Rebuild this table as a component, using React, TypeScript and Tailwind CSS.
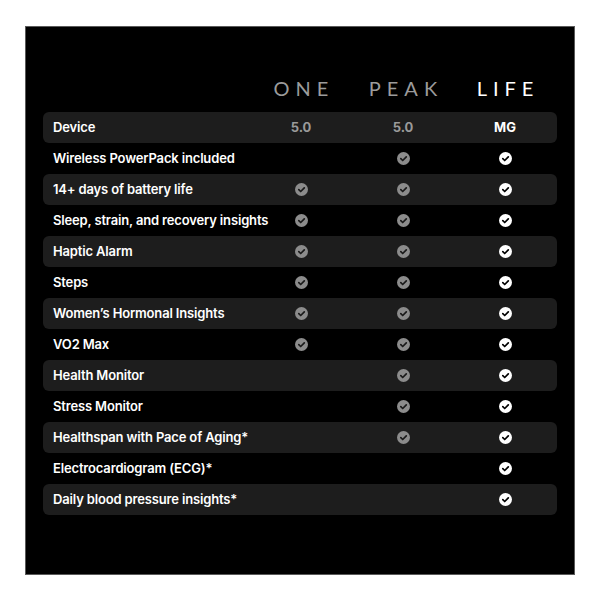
import React from "react";

type Mark = "none" | "grey" | "white";

const ROWS: { label: string; cells: (Mark | string)[] }[] = [
  { label: "Device", cells: ["5.0", "5.0", "MG"] },
  { label: "Wireless PowerPack included", cells: ["none", "grey", "white"] },
  { label: "14+ days of battery life", cells: ["grey", "grey", "white"] },
  { label: "Sleep, strain, and recovery insights", cells: ["grey", "grey", "white"] },
  { label: "Haptic Alarm", cells: ["grey", "grey", "white"] },
  { label: "Steps", cells: ["grey", "grey", "white"] },
  { label: "Women’s Hormonal Insights", cells: ["grey", "grey", "white"] },
  { label: "VO2 Max", cells: ["grey", "grey", "white"] },
  { label: "Health Monitor", cells: ["none", "grey", "white"] },
  { label: "Stress Monitor", cells: ["none", "grey", "white"] },
  { label: "Healthspan with Pace of Aging*", cells: ["none", "grey", "white"] },
  { label: "Electrocardiogram (ECG)*", cells: ["none", "none", "white"] },
  { label: "Daily blood pressure insights*", cells: ["none", "none", "white"] },
];

function Check({ tone }: { tone: "grey" | "white" }) {
  const fill = tone === "white" ? "#ffffff" : "#8c8c8c";
  const stroke = tone === "white" ? "#000000" : "#1a1a1a";
  return (
    <svg width="13" height="13" viewBox="0 0 13 13">
      <circle cx="6.5" cy="6.5" r="6.5" fill={fill} />
      <path d="M3.8 6.7 L5.7 8.5 L9.3 4.8" fill="none" stroke={stroke} strokeWidth="1.7" strokeLinecap="round" strokeLinejoin="round" />
    </svg>
  );
}

function Cell({ value, col }: { value: Mark | string; col: number }) {
  if (value === "none") return <div />;
  if (value === "grey" || value === "white") {
    return (
      <div className="flex items-center justify-center">
        <Check tone={value} />
      </div>
    );
  }
  return (
    <div className={`text-center text-[13px] font-bold ${col === 2 ? "text-white" : "text-[#9a9a9a]"}`}>{value}</div>
  );
}

export default function App() {
  return (
    <div className="flex h-[600px] w-[600px] items-start bg-white pl-[25px] pt-[26px]" style={{ fontFamily: "Inter, 'Open Sans', sans-serif" }}>
      <div className="h-[549px] w-[550px] border border-[#5a5a5a] bg-black pl-[17px] pt-[49px]">
        <div className="grid w-[514px] grid-cols-[207px_102px_102px_102px] pb-[12px]">
          <div />
          {["ONE", "PEAK", "LIFE"].map((h, i) => (
            <div
              key={h}
              className={`pl-[0.3em] text-center text-[20px] font-normal leading-[24px] tracking-[0.3em] ${i === 2 ? "text-white" : "text-[#9b9b9b]"}`}
              style={{ fontFamily: "Lato, 'Open Sans', sans-serif" }}
            >
              {h}
            </div>
          ))}
        </div>
        <div className="flex w-[514px] flex-col">
          {ROWS.map((row, i) => (
            <div
              key={row.label}
              className={`grid h-[31px] grid-cols-[207px_102px_102px_102px] items-center rounded-[6px] ${i % 2 === 0 ? "bg-[#1d1d1d]" : "bg-black"}`}
            >
              <div className="whitespace-nowrap pl-[10px] text-[13px] font-semibold tracking-[-0.012em] text-white">{row.label}</div>
              {row.cells.map((c, j) => (
                <Cell key={j} value={c} col={j} />
              ))}
            </div>
          ))}
        </div>
      </div>
    </div>
  );
}
